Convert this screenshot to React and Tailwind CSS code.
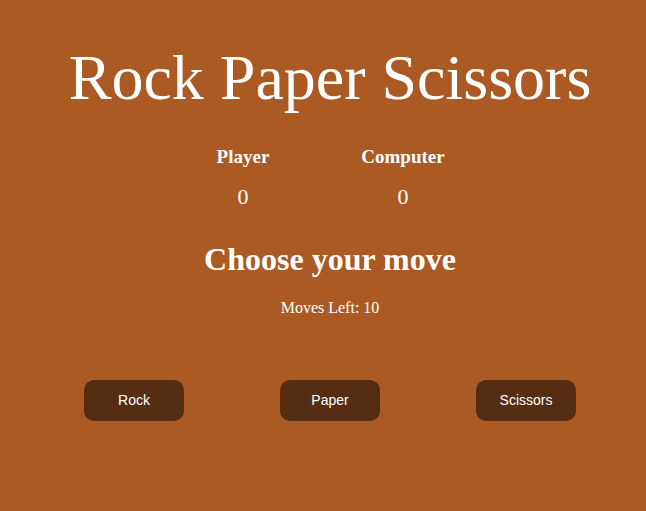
export default function App() {
  return (
    <div className="w-[646px] h-[511px] bg-[#aa5a22] text-white overflow-hidden" style={{ fontFamily: '"Liberation Serif", serif' }}>
      <h1 className="pl-[14px] text-center text-[64px] leading-none pt-[46px]">Rock Paper Scissors</h1>
      <div className="flex justify-center gap-[92px] mt-[37px]">
        <div className="flex flex-col items-center w-[68px]">
          <div className="text-[19px] font-bold leading-none">Player</div>
          <div className="text-[22px] leading-none mt-[20px]">0</div>
        </div>
        <div className="flex flex-col items-center w-[68px]">
          <div className="text-[19px] font-bold leading-none">Computer</div>
          <div className="text-[22px] leading-none mt-[20px]">0</div>
        </div>
      </div>
      <h2 className="pl-[14px] text-center text-[32px] font-bold leading-none mt-[35px]">Choose your move</h2>
      <p className="pl-[14px] text-center text-[16px] leading-none mt-[25px]">Moves Left: 10</p>
      <div className="pl-[14px] flex justify-center gap-[96px] mt-[64px]" style={{ fontFamily: '"Liberation Sans", sans-serif' }}>
        {["Rock", "Paper", "Scissors"].map((t) => (
          <button key={t} className="w-[100px] h-[41px] rounded-[10px] bg-[#542d12] text-white text-[14px]">{t}</button>
        ))}
      </div>
    </div>
  );
}
